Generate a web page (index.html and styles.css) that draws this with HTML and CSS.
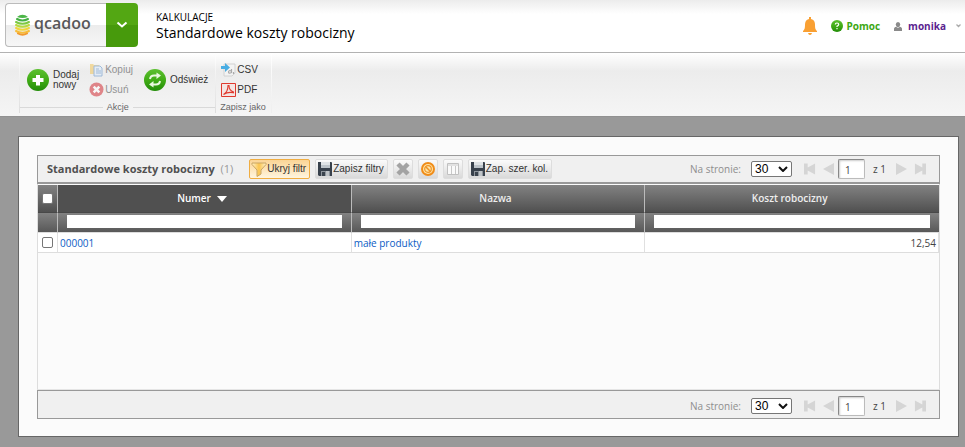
FILE: index.html
```html
<!DOCTYPE html>
<html lang="pl">
<head>
<meta charset="utf-8">
<title>qcadoo</title>
<link rel="stylesheet" href="styles.css">
</head>
<body>
<svg class="defs" aria-hidden="true">
  <defs>
    <linearGradient id="green" x1="0" y1="0" x2="0" y2="1"><stop offset="0" stop-color="#5cc030"/><stop offset=".5" stop-color="#41ac16"/><stop offset="1" stop-color="#228c08"/></linearGradient>
    <radialGradient id="orange"><stop offset="0" stop-color="#fff0c0"/><stop offset=".5" stop-color="#fbc96a"/><stop offset=".75" stop-color="#f39a24"/><stop offset="1" stop-color="#ef8a12"/></radialGradient>
    <linearGradient id="funnel" x1="0" y1="0" x2="1" y2="0"><stop offset="0" stop-color="#fff1c8"/><stop offset=".5" stop-color="#fac44e"/><stop offset="1" stop-color="#fff1c8"/></linearGradient>
    <symbol id="disk" viewBox="0 0 16 16">
      <path d="M1 1h13.500l.5 1v13H2l-1-1z" fill="#38414c"/>
      <path d="M4 1h9v6H4z" fill="#dfe3e6"/><path d="M4 4h9v3H4z" fill="#bcc3c9"/>
      <path d="M4 10h9v5H4z" fill="#8f969d"/><path d="M5 11h3v4H5z" fill="#3b444e"/><path d="M9 10h3v5H9z" fill="#bfc4c8"/>
    </symbol>
    <symbol id="first" viewBox="0 0 13 12"><path d="M0 0h4v4.500L12 0v12L4 7.500V12H0z"/></symbol>
    <symbol id="prev" viewBox="0 0 11 12"><path d="M11 0v12L0 6z"/></symbol>
    <symbol id="chevron" viewBox="0 0 10 6"><path d="M1 1l4 4 4-4" fill="none" stroke="#111" stroke-width="2"/></symbol>
  </defs>
</svg>

<header class="header">
  <div class="brand">
    <a class="logo" href="#">
      <svg width="15" height="22" viewBox="0 0 15 22" aria-hidden="true">
        <path d="M2 3Q7.500-1.500 13 3Q7.500 5 2 3z" fill="#4cb648"/>
        <g fill="none" stroke-width="2" stroke-linecap="round">
          <path d="M2 5q5.500 3 11 0" stroke="#43b043"/><path d="M1 8q6.500 3.500 13 0" stroke="#7cc842"/><path d="M1 11q6.500 3.500 13 0" stroke="#b7d940"/><path d="M1 14q6.500 3.500 13 0" stroke="#f0d53b"/><path d="M1 17q6.500 3.500 13 0" stroke="#f8bd38"/><path d="M3 19.500q4.500 2.500 9 0" stroke="#f29a2e"/>
        </g>
      </svg>
      <span>qcadoo</span>
    </a>
    <button class="brand-menu" aria-label="Menu">
      <svg width="12" height="8" viewBox="0 0 12 8"><path d="M1.500 1.500L6 5.500l4.500-4" fill="none" stroke="#fff" stroke-width="2"/></svg>
    </button>
  </div>
  <div class="titles">
    <span class="section">KALKULACJE</span>
    <h1>Standardowe koszty robocizny</h1>
  </div>
  <nav class="user-nav">
    <button class="bell" aria-label="Powiadomienia">
      <svg width="14" height="18" viewBox="0 0 14 18" fill="#f9a033"><path d="M6 0h2v2c3 .5 4 3 4 5.500 0 4 .5 5 2 6.500v1H0v-1c1.500-1.500 2-2.500 2-6.500C2 5 3 2.500 6 2z"/><path d="M5 16h4q-.5 2-2 2t-2-2z"/></svg>
    </button>
    <a class="help" href="#">
      <svg width="12" height="12" viewBox="0 0 12 12"><circle cx="6" cy="6" r="6" fill="url(#green)"/><path d="M4.300 4.600Q4.300 3 6 3t1.700 1.500Q7.700 5.400 6 6.200v.7M6 8v1.300" fill="none" stroke="#fff" stroke-width="1.200"/></svg>
      Pomoc</a>
    <a class="user" href="#">
      <svg width="8" height="9" viewBox="0 0 8 9" fill="#8a8a8a"><ellipse cx="4" cy="2.600" rx="2.200" ry="2.600"/><path d="M0 9V6.500Q.5 5 2.200 4.800 4 6.500 5.800 4.800 7.500 5 8 6.500V9z"/></svg>
      <span>monika</span>
      <svg class="caret" width="5" height="4" viewBox="0 0 5 4"><path d="M.5 .5l2 2 2-2" fill="none" stroke="#aaa" stroke-width="1.300"/></svg>
    </a>
  </nav>
</header>

<div class="ribbon">
  <section class="group actions">
    <div class="tools">
      <button class="big">
        <svg width="22" height="22" viewBox="0 0 22 22"><circle cx="11" cy="11" r="11" fill="url(#green)"/><path d="M9 6h4v3h3.500v4H13v3.500H9V13H5.500V9H9z" fill="#fff"/></svg>
        <span>Dodaj<br>nowy</span>
      </button>
      <div class="stack">
        <button class="small" disabled>
          <svg width="15" height="14" viewBox="0 0 15 14"><path d="M1 1h3l1 1h5v9H1z" fill="#f0c250"/><path d="M5 3h6l2 2v8H5z" fill="#dcebfb" stroke="#5588c4"/><path d="M7 6h3M7 8h5M7 10h5" stroke="#5588c4"/></svg>
          Kopiuj</button>
        <button class="small" disabled>
          <svg width="15" height="15" viewBox="0 0 15 15"><circle cx="7.500" cy="7.500" r="7" fill="#d01c24"/><path d="M4.700 4.700l5.600 5.600M10.300 4.700l-5.600 5.600" stroke="#fff" stroke-width="2.600"/></svg>
          Usuń</button>
      </div>
      <button class="big">
        <svg width="22" height="22" viewBox="0 0 22 22"><circle cx="11" cy="11" r="11" fill="url(#green)"/><g fill="none" stroke="#e9f8df" stroke-width="2"><path d="M6 10q.5-3.500 4-3.500h4"/><path d="M16 12q-.5 3.500-4 3.500H8"/></g><path d="M12.500 3.500l4.500 3-4.500 3.500zM9.500 12l-4.500 3.500L9.500 18.500z" fill="#e9f8df"/></svg>
        <span>Odśwież</span>
      </button>
    </div>
    <div class="caption"><span>Akcje</span></div>
  </section>
  <section class="group exports">
    <div class="stack">
      <button class="small">
        <svg width="15" height="14" viewBox="0 0 15 14"><path d="M3 1h11v9l-3 3H3z" fill="#f3f3f3" stroke="#d2d2d2"/><path d="M0 3h4V0l5 4.500L4 9V6H0z" fill="#49ade3"/><path d="M10.500 6v4M10.500 8q-3-1-3 1t3 .5M12.500 9v2" fill="none" stroke="#aaa" stroke-width="1.200"/></svg>
        CSV</button>
      <button class="small">
        <svg width="15" height="14" viewBox="0 0 15 14"><path d="M.5 .5h14v13H.5z" fill="#f4e6e4" stroke="#df3a2e"/><path d="M2.500 11.500q4.500-2.500 4.500-9h1q0 5 4.500 6.500v.8Q7 8.500 2.500 11.500z" fill="none" stroke="#df3a2e" stroke-width="1.100"/></svg>
        PDF</button>
    </div>
    <div class="caption"><span>Zapisz jako</span></div>
  </section>
</div>

<main class="workspace">
  <div class="panel">
    <div class="grid">
      <div class="bar top">
        <h2>Standardowe koszty robocizny <span>(1)</span></h2>
        <div class="buttons">
          <button class="tool active"><svg width="16" height="16" viewBox="0 0 16 16"><path d="M1 2h14v1.500L10 9v4l-4 2.500V9L1 3.500z" fill="url(#funnel)" stroke="#c9a562"/></svg>Ukryj filtr</button>
          <button class="tool"><svg width="16" height="16"><use href="#disk"/></svg>Zapisz filtry</button>
          <button class="tool icon" aria-label="Wyczyść filtr"><svg width="16" height="16" viewBox="0 0 16 16"><path d="M3 3l10 10M13 3L3 13" stroke="#a3a3a3" stroke-width="4.500"/></svg></button>
          <button class="tool icon" aria-label="Resetuj"><svg width="16" height="16" viewBox="0 0 16 16"><circle cx="8" cy="8" r="7" fill="#f08c18"/><circle cx="8" cy="8" r="5" fill="#ffe3a6"/><circle cx="8" cy="8" r="3.300" fill="none" stroke="#ee9425" stroke-width="1.200"/><path d="M5.500 5.500l5 5" stroke="#ee9425" stroke-width="1.500"/></svg></button>
          <button class="tool icon" aria-label="Kolumny"><svg width="16" height="16" viewBox="0 0 16 16"><path d="M2.500 2.500h11v11h-11z" fill="#fafafa" stroke="#c0c0c0"/><path d="M3 4h10M6.500 5v8M10.500 5v8" stroke="#c8c8c8"/></svg></button>
          <button class="tool"><svg width="16" height="16"><use href="#disk"/></svg>Zap. szer. kol.</button>
        </div>
        <div class="pager">
          <label for="size-top">Na stronie:</label>
          <span class="select"><select id="size-top"><option>30</option></select><svg width="10" height="6"><use href="#chevron"/></svg></span>
          <button disabled aria-label="Pierwsza"><svg width="12" height="12"><use href="#first"/></svg></button>
          <button disabled aria-label="Poprzednia"><svg width="11" height="12"><use href="#prev"/></svg></button>
          <input type="text" value="1" aria-label="Strona">
          <span class="total">z 1</span>
          <button class="flip" disabled aria-label="Następna"><svg width="11" height="12"><use href="#prev"/></svg></button>
          <button class="flip" disabled aria-label="Ostatnia"><svg width="12" height="12"><use href="#first"/></svg></button>
        </div>
      </div>

      <div class="table-area">
        <table>
          <colgroup><col class="check-col"><col><col><col></colgroup>
          <thead>
            <tr class="heads">
              <th><input type="checkbox" aria-label="Zaznacz wszystkie"></th>
              <th class="sorted">Numer <svg width="10" height="6" viewBox="0 0 10 6"><path d="M0 0h10L5 6z" fill="#fff"/></svg></th>
              <th>Nazwa</th>
              <th>Koszt robocizny</th>
            </tr>
            <tr class="filters">
              <td></td>
              <td><input type="text" aria-label="Filtr: Numer"></td>
              <td><input type="text" aria-label="Filtr: Nazwa"></td>
              <td><input type="text" aria-label="Filtr: Koszt robocizny"></td>
            </tr>
          </thead>
          <tbody>
            <tr>
              <td><input type="checkbox" aria-label="Zaznacz 000001"></td>
              <td><a href="#">000001</a></td>
              <td><a href="#">małe produkty</a></td>
              <td class="number">12,54</td>
            </tr>
          </tbody>
        </table>
      </div>

      <div class="bar bottom">
        <div class="pager">
          <label for="size-bottom">Na stronie:</label>
          <span class="select"><select id="size-bottom"><option>30</option></select><svg width="10" height="6"><use href="#chevron"/></svg></span>
          <button disabled aria-label="Pierwsza"><svg width="12" height="12"><use href="#first"/></svg></button>
          <button disabled aria-label="Poprzednia"><svg width="11" height="12"><use href="#prev"/></svg></button>
          <input type="text" value="1" aria-label="Strona">
          <span class="total">z 1</span>
          <button class="flip" disabled aria-label="Następna"><svg width="11" height="12"><use href="#prev"/></svg></button>
          <button class="flip" disabled aria-label="Ostatnia"><svg width="12" height="12"><use href="#first"/></svg></button>
        </div>
      </div>
    </div>
  </div>
</main>
</body>
</html>
```
FILE: styles.css
```css
* { box-sizing: border-box; }
body {
  margin: 0;
  min-height: 100vh;
  display: flex;
  flex-direction: column;
  background: #999;
  color: #444;
  font: 10px/12px "Open Sans", "Noto Sans", sans-serif;
}
button, input, select { font: inherit; color: inherit; margin: 0; }
button { padding: 0; border: 0; background: none; }
a { text-decoration: none; }
svg { display: block; flex: none; }
h1, h2 { margin: 0; }
.defs { position: absolute; width: 0; height: 0; }

.header {
  height: 53px;
  display: flex;
  align-items: flex-start;
  padding: 3px 4px 0 5px;
  border-bottom: 1px solid #b2b2b2;
  background: linear-gradient(#ececec, #fff 14px);
}
.brand { display: flex; width: 133px; height: 44px; }
.logo {
  flex: 1;
  display: flex;
  align-items: center;
  gap: 4px;
  padding-left: 9px;
  border: 1px solid #bbb;
  border-right: 0;
  border-radius: 4px 0 0 4px;
  background: linear-gradient(#fff 50%, #ececec 50%, #f6f6f6);
  color: #58585a;
  font: 600 16px/20px "Open Sans", sans-serif;
}
.logo span { padding-bottom: 4px; }
.brand-menu {
  width: 32px;
  display: grid;
  place-items: center;
  border-radius: 0 4px 4px 0;
  background: linear-gradient(#53a713 50%, #479a0c 50%);
}
.titles { margin-left: 18px; padding-top: 8px; color: #000; }
.section { display: block; font-size: 10px; line-height: 13px; }
h1 { font-size: 14px; line-height: 17px; font-weight: 400; }
.user-nav {
  margin-left: auto;
  display: flex;
  align-items: center;
  padding-top: 14px;
  font-weight: 700;
}
.help { display: flex; align-items: center; gap: 3px; margin-left: 14px; color: #3da813; }
.user { display: flex; align-items: center; gap: 6px; margin-left: 14px; color: #5b1f8f; }
.caret { margin-left: 4px; }

.ribbon {
  height: 63px;
  display: flex;
  padding-left: 19px;
  background: linear-gradient(#fff, #ececec 18px, #f5f5f5);
  color: #333;
  font: 10px/10px "Liberation Sans", Arial, sans-serif;
}
.group { height: 60px; padding-top: 9px; display: flex; flex-direction: column; }
.actions { border-right: 1px solid #ddd; border-left: 1px solid #e2e2e2; }
.exports { border-right: 1px solid #eee; }
.actions { border-image: linear-gradient(#fff, #ddd) 1; }
.exports { border-image: linear-gradient(#fff, #eee) 1; }
.tools { display: flex; align-items: center; padding: 0 7px; }
.big { display: flex; align-items: center; gap: 4px; text-align: left; }
.stack { display: flex; flex-direction: column; gap: 5px; margin: 0 11px 0 10px; }
.exports .stack { margin: 0 3px 0 5px; }
.small { display: flex; align-items: center; gap: 1px; height: 15px; }
.small:disabled { opacity: .5; }
.caption { margin-top: 5px; display: flex; align-items: center; gap: 4px; color: #666; font-size: 9px; line-height: 10px; }
.actions .caption::before, .actions .caption::after { content: ""; flex: 1; height: 1px; background: #d9d9d9; }
.exports .caption { padding: 0 5px 0 4px; }

.workspace { flex: 1; display: flex; padding: 19px 6px 10px 18px; border-top: 1px solid #919191; }
.panel { flex: 1; display: flex; min-width: 0; padding: 18px 18px 17px; border: 1px solid #666; background: #fbfbfb; }
.grid { flex: 1; min-width: 0; display: flex; flex-direction: column; }
.bar { display: flex; align-items: center; height: 29px; border: 1px solid #999; background: #f0f0f0; }
.top { border-bottom-width: 2px; }
.bottom { padding-top: 2px; }
h2 { margin-left: 9px; color: #505050; font-size: 11px; line-height: 14px; font-weight: 700; }
h2 span { margin-left: 3px; color: #999; font-weight: 400; }
.buttons { display: flex; gap: 5px; margin-left: 16px; }
.tool {
  height: 20px;
  display: flex;
  align-items: center;
  padding: 0 3px 0 1px;
  border: 1px solid #ddd;
  border-radius: 2px;
  background: linear-gradient(#fbfbfb, #d9d9d9);
  color: #333;
  font: 10px/12px "Liberation Sans", Arial, sans-serif;
}
.icon { padding: 0 1px; }
.active { border-color: #f0ad42; background: linear-gradient(#fbd596, #fde4b8 50%, #fff5df); }

.pager { margin-left: auto; display: flex; align-items: center; gap: 7px; padding-right: 13px; color: #444; }
.pager label { color: #8e8e8e; margin-right: 3px; }
.select { display: grid; align-items: center; margin-right: 5px; }
.select > * { grid-area: 1 / 1; }
.select svg { justify-self: end; margin-right: 4px; pointer-events: none; }
.select select {
  appearance: none;
  width: 41px;
  height: 16px;
  padding: 0 3px;
  border: 1px solid #767676;
  border-radius: 2px;
  background: #fff;
  color: #000;
  font: 12px/14px "Liberation Sans", Arial, sans-serif;
}
.pager button { color: #d5d5d5; fill: #d5d5d5; }
.pager input {
  width: 27px;
  height: 20px;
  margin-left: -3px;
  padding: 2px 6px 0;
  border: 1px solid #999;
  border-color: #888 #bbb #bbb #888;
  border-radius: 2px;
  background: #fff;
  box-shadow: inset 1px 1px 2px #ccc;
}
.total { margin: 0 3px 0 1px; }
.flip { transform: scaleX(-1); }

.table-area { flex: 1; padding-top: 1px; border: 1px solid #ddd; border-top: 0; border-bottom-color: #e5e5e5; }
table { width: 100%; table-layout: fixed; border-collapse: separate; border-spacing: 0; }
.check-col { width: 20px; }
th, td { padding: 0; }
.heads th {
  height: 28px;
  padding: 0 5px 2px 0;
  border-right: 1px solid #bbb;
  border-bottom: 1px solid #484848;
  background: linear-gradient(#828282, #505050);
  color: #eee;
  font-weight: 600;
}
.heads th:first-child { padding: 0; }
.heads .sorted { background: #505050; color: #fff; }
.sorted svg { display: inline-block; margin-left: 3px; }
.heads th:last-child, .filters td:last-child { border-right: 0; }
.filters td {
  height: 20px;
  padding: 0 9px 2px;
  border-right: 1px solid #bbb;
  border-bottom: 1px solid #ddd;
  background: linear-gradient(#828282, #585858);
}
.filters input { display: block; width: 100%; height: 13px; padding: 0 2px; border: 0; background: #fff; }
.filters td:first-child { padding: 0; }
tbody td { height: 20px; padding: 0 2px; border-right: 1px solid #e0e0e0; border-bottom: 1px solid #ddd; background: #fff; }
tbody a { color: #0b5cc4; }
.number { text-align: right; }
table input[type="checkbox"] {
  appearance: none;
  display: block;
  width: 11px;
  height: 11px;
  margin: 0 auto;
  border: 1px solid #767676;
  border-radius: 2px;
  background: #fff;
}
```
